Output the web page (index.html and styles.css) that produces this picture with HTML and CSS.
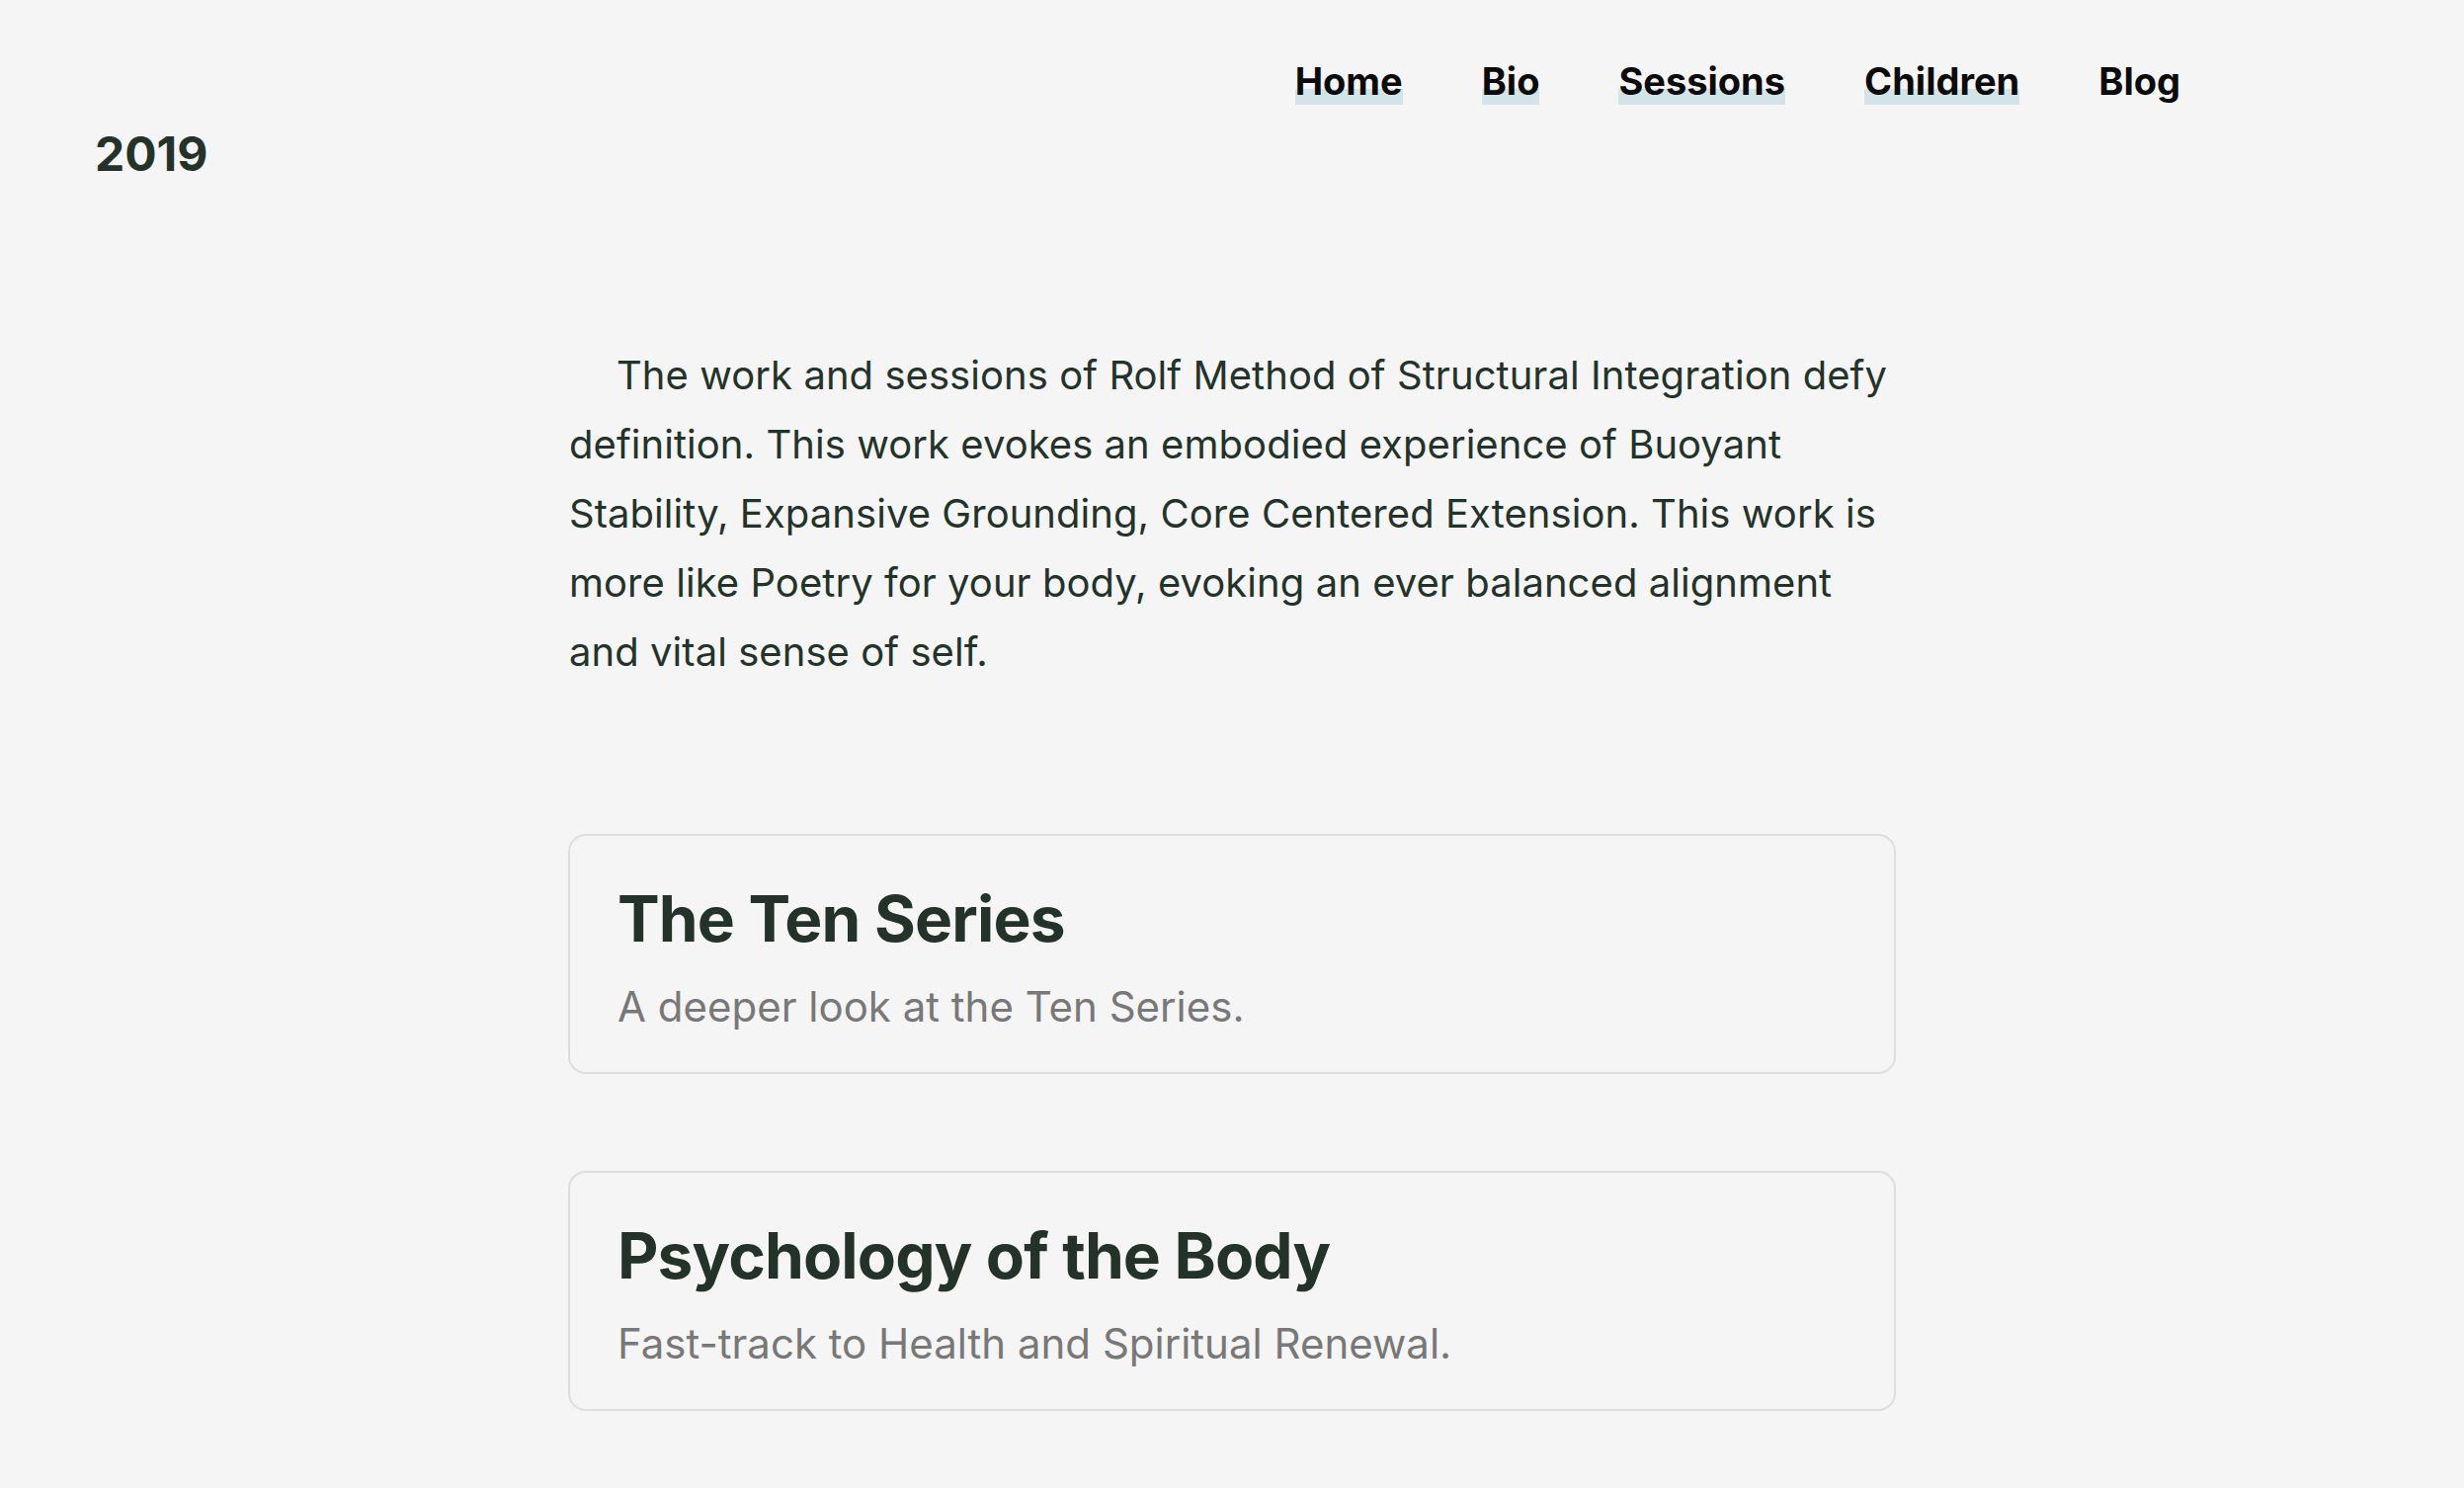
FILE: index.html
```html
<!DOCTYPE html>
<html lang="en">
<head>
<meta charset="utf-8">
<title>2019</title>
<link rel="stylesheet" href="styles.css">
</head>
<body>
<header class="site-header">
  <div class="logo">2019</div>
  <nav class="nav">
    <a class="nav-link marked" href="#">Home</a>
    <a class="nav-link marked" href="#">Bio</a>
    <a class="nav-link marked" href="#">Sessions</a>
    <a class="nav-link marked" href="#">Children</a>
    <a class="nav-link" href="#">Blog</a>
  </nav>
</header>
<main class="content">
  <p class="intro">The work and sessions of Rolf Method of Structural Integration defy definition. This work evokes an embodied experience of Buoyant Stability, Expansive Grounding, Core Centered Extension. This work is more like Poetry for your body, evoking an ever balanced alignment and vital sense of self.</p>
  <a class="card" href="#">
    <h2 class="card-title">The Ten Series</h2>
    <p class="card-text">A deeper look at the Ten Series.</p>
  </a>
  <a class="card" href="#">
    <h2 class="card-title">Psychology of the Body</h2>
    <p class="card-text">Fast-track to Health and Spiritual Renewal.</p>
  </a>
</main>
</body>
</html>
```
FILE: styles.css
```css
* { box-sizing: border-box; }
html, body {
  margin: 0;
  padding: 0;
  background: #f5f5f5;
}
body {
  font-family: Inter, "Noto Sans", "Liberation Sans", sans-serif;
  color: #23332a;
}
.site-header {
  display: flex;
  justify-content: space-between;
  align-items: flex-start;
  padding: 59px 287px 0 96px;
}
.logo {
  margin-top: 67px;
  font-size: 48px;
  font-weight: 700;
  line-height: normal;
  color: #23332a;
}
.nav {
  display: flex;
  gap: 80px;
}
.nav-link {
  font-size: 38px;
  font-weight: 700;
  line-height: normal;
  color: #0b0b0b;
  text-decoration: none;
}
.nav-link.marked {
  background: linear-gradient(to bottom, transparent 65%, #d3e4e8 65%);
  padding-bottom: 1px;
}
.content {
  width: 1344px;
  margin: 160px auto 0;
  display: flex;
  flex-direction: column;
}
.intro {
  margin: 0;
  padding-left: 1px;
  font-size: 40px;
  line-height: 70px;
  text-indent: 48px;
  letter-spacing: 0.05px;
  color: #23332a;
}
.card {
  display: block;
  margin-top: 149px;
  border: 2px solid #dedede;
  border-radius: 18px;
  padding: 46px 48px 35px;
  text-decoration: none;
}
.card + .card {
  margin-top: 98px;
}
.card-title {
  margin: 0;
  font-size: 64px;
  font-weight: 700;
  line-height: 1.2;
  letter-spacing: -0.85px;
  color: #23332a;
}
.card-text {
  margin: 18px 0 0;
  font-size: 42px;
  line-height: 1.5;
  color: #787878;
}
```
